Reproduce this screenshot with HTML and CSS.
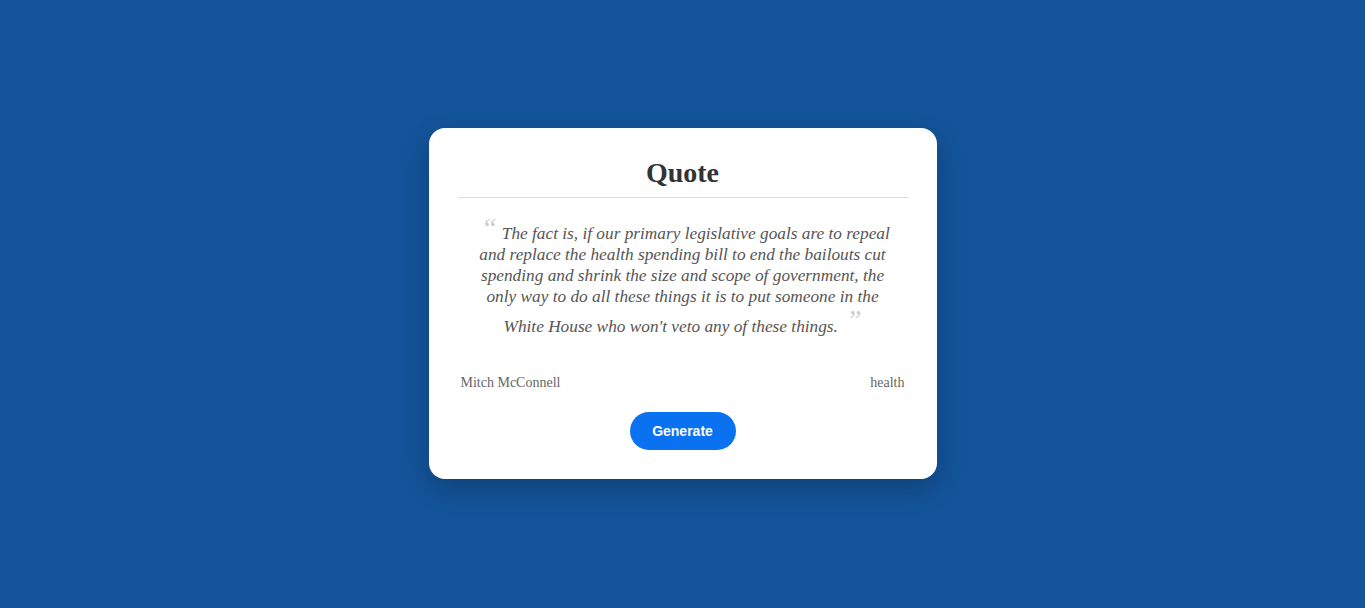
FILE: index.html
```html
<!DOCTYPE html>
<html lang="en">
<head>
<meta charset="utf-8">
<title>Quote</title>
<link rel="stylesheet" href="styles.css">
</head>
<body>
<main class="page">
  <section class="card">
    <h2 class="title">Quote</h2>
    <div class="divider"></div>
    <blockquote class="quote">
      <span class="mark mark-open">&ldquo;</span>The fact is, if our primary legislative goals are to repeal and replace the health spending bill to end the bailouts cut spending and shrink the size and scope of government, the only way to do all these things it is to put someone in the White House who won't veto any of these things.<span class="mark mark-close">&rdquo;</span>
    </blockquote>
    <div class="meta">
      <span class="author">Mitch McConnell</span>
      <span class="tag">health</span>
    </div>
    <div class="actions">
      <button class="btn" type="button">Generate</button>
    </div>
  </section>
</main>
</body>
</html>
```
FILE: styles.css
```css
html, body {
  margin: 0;
  padding: 0;
  height: 100%;
}
body {
  background: #13549a;
  font-family: "Liberation Serif", "Times New Roman", serif;
}
.page {
  box-sizing: border-box;
  height: 608px;
  padding-top: 128px;
  display: flex;
  justify-content: center;
  align-items: flex-start;
}
.card {
  box-sizing: border-box;
  width: 508px;
  height: 351px;
  background: #fff;
  border-radius: 16px;
  padding: 29px 29px 29px;
  box-shadow: 0 10px 30px rgba(0, 0, 0, 0.22);
  display: flex;
  flex-direction: column;
}
.title {
  margin: 0;
  font-size: 28px;
  line-height: 32px;
  font-weight: bold;
  text-align: center;
  color: #333;
}
.divider {
  margin-top: 8px;
  height: 1px;
  background: #dcdcdc;
}
.quote {
  margin: 25px 0 0;
  padding: 0 14px;
  text-align: center;
  font-style: italic;
  font-size: 17.3px;
  line-height: 21px;
  color: #555;
}
.mark {
  font-size: 28px;
  color: #ccc;
  font-style: italic;
}
.mark-open {
  line-height: 0;
  margin-left: 6px;
  margin-right: 5px;
  vertical-align: 2px;
}
.mark-close {
  line-height: 26px;
  margin-left: 8px;
  vertical-align: 3px;
}
.meta {
  margin-top: auto;
  display: flex;
  justify-content: space-between;
  padding: 0 3px;
  font-size: 14px;
  color: #666;
}
.actions {
  margin-top: 21px;
  display: flex;
  justify-content: center;
}
.btn {
  width: 106px;
  height: 38px;
  border: none;
  border-radius: 19px;
  background: #0a71f0;
  color: #fff;
  font-family: "Liberation Sans", Arial, sans-serif;
  font-weight: bold;
  font-size: 14px;
}
```
